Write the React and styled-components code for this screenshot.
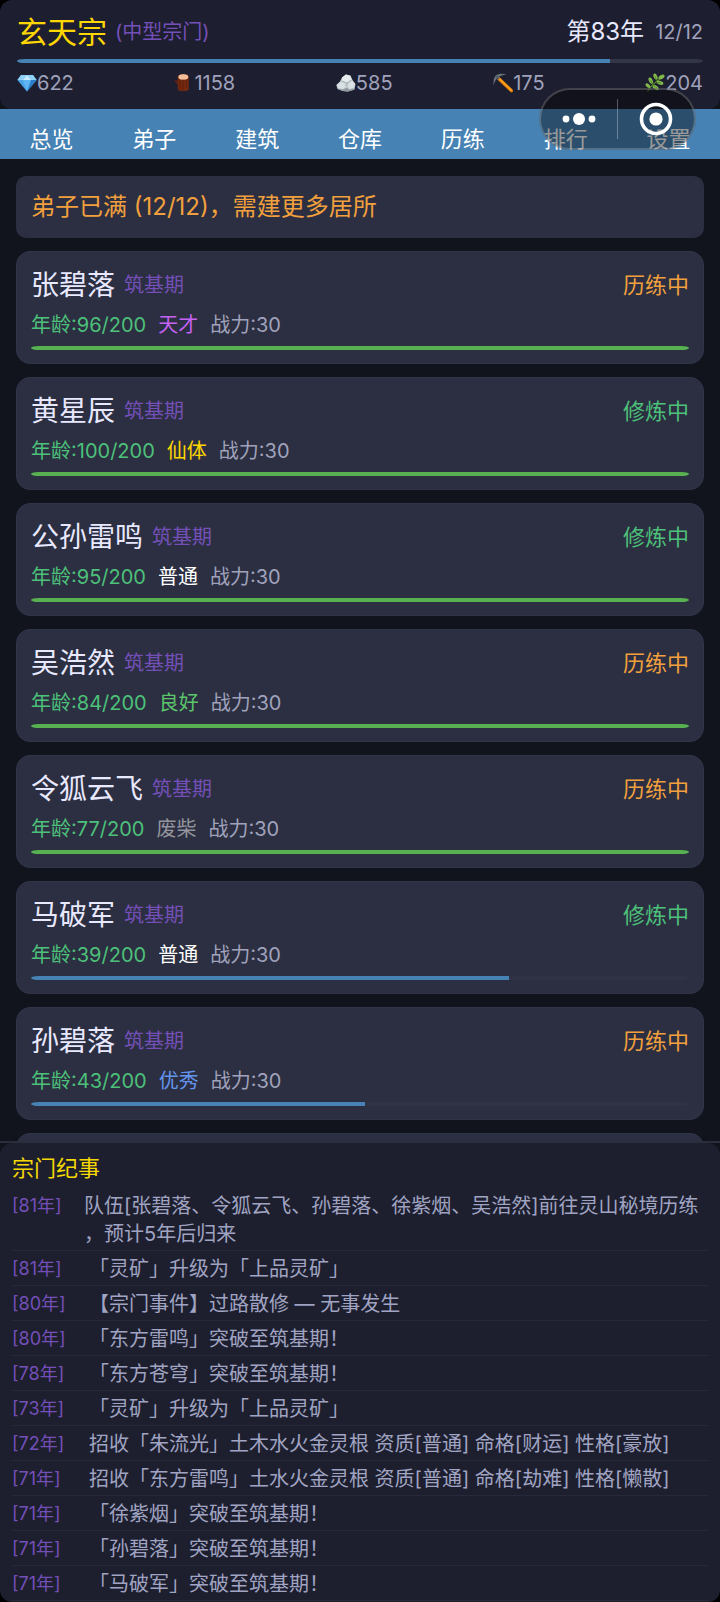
import React from "react";
import styled, { createGlobalStyle } from "styled-components";

const GlobalStyle = createGlobalStyle`
    * {
        box-sizing: border-box;
    }

    body {
        margin: 0;
        background: #000;
        color: #e8e8ff;
        font-family: Inter, "Noto Sans CJK SC", sans-serif;
        font-size: 20px;
    }

    button {
        border: 0;
        padding: 0;
        background: none;
        color: inherit;
        font: inherit;
        cursor: pointer;
    }
`

const Page = styled.div`
    position: relative;
    display: flex;
    flex-direction: column;
    height: 100vh;
    background: #11141d;
    border-radius: 12px;
    overflow: hidden;
`

const Header = styled.header`
    flex-shrink: 0;
    padding: 12px 17px;
    background: #1d1f30;
    border-radius: 12px;
`

const HeaderRow = styled.div`
    display: flex;
    align-items: center;
    justify-content: space-between;
    line-height: 40px;
`

const HeaderGroup = styled.div`
    display: flex;
    align-items: center;
    gap: ${props => props.$gap}px;
`

const SectName = styled.h1`
    margin: 0;
    font-size: 30px;
    font-weight: 400;
    color: #ffd700;
`

const SectRank = styled.span`
    color: #744fb8;
`

const Year = styled.span`
    font-size: 24px;
    color: #e8e8ff;
`

const Muted = styled.span`
    color: #a0a2bc;
`

const Track = styled.div`
    height: 4px;
    margin-top: 7px;
    border-radius: 8px / 50%;
    background: ${props => props.$back};
    overflow: hidden;
`

const Fill = styled.div`
    height: 100%;
    background: ${props => props.$color};
`

const Resources = styled.div`
    display: flex;
    justify-content: space-between;
    padding-top: 6px;
    line-height: 28px;
`

const Resource = styled.div`
    display: flex;
    align-items: center;
    color: #a0a2bc;

    svg {
        width: 20px;
        height: 20px;
    }
`

const Tabs = styled.nav`
    display: flex;
    flex-shrink: 0;
    background: #4682b4;
`

const Tab = styled.button`
    flex: 1;
    && {
        padding: 15px 0 5px;
    }
    font-size: 22px;
    line-height: 30px;
    color: #fff;
`

const Capsule = styled.div`
    position: absolute;
    top: 88px;
    right: 24px;
    display: flex;
    align-items: center;
    width: 157px;
    height: 62px;
    border: 2px solid rgba(255, 255, 255, 0.2);
    border-radius: 31px;
    background: rgba(0, 0, 0, 0.4);
`

const CapsuleButton = styled.button`
    display: flex;
    align-items: center;
    justify-content: center;
    flex: 1;
    height: 40px;

    & + & {
        border-left: 1px solid rgba(255, 255, 255, 0.3);
    }
`

const List = styled.main`
    display: flex;
    flex-direction: column;
    flex: 1;
    gap: 13px;
    min-height: 0;
    padding: 17px 16px 0;
    overflow-y: auto;
    scrollbar-width: none;
`

const Notice = styled.div`
    flex-shrink: 0;
    padding: 15px;
    border-radius: 10px;
    background: #2b2f41;
    font-size: 24px;
    line-height: 32px;
    color: #f2a03d;
`

const Card = styled.article`
    flex-shrink: 0;
    min-height: 113px;
    padding: 15px 14px 13px;
    border: 1px solid #31354a;
    border-radius: 14px;
    background: #2b2f41;
`

const CardTop = styled.div`
    display: flex;
    align-items: center;
    gap: 9px;
    line-height: 36px;
`

const Name = styled.h2`
    margin: 0;
    font-size: 28px;
    font-weight: 400;
`

const Status = styled.span`
    margin-left: auto;
    font-size: 22px;
    color: ${props => props.$away ? "#f2a03d" : "#4dc07a"};
`

const Stats = styled.div`
    display: flex;
    gap: 12px;
    margin-top: 8px;
    line-height: 28px;
    color: #a0a2bc;
`

const Stat = styled.span`
    color: ${props => props.$color};
`

const LogPanel = styled.section`
    flex-shrink: 0;
    border-top: 2px solid #2a2d3d;
`

const LogBody = styled.div`
    padding: 10px 12px 1px;
    border-radius: 12px;
    background: #1d1f2f;
`

const LogTitle = styled.h2`
    margin: 0 0 5px;
    font-size: 22px;
    font-weight: 400;
    line-height: 30px;
    color: #f5d800;
`

const LogRow = styled.div`
    display: flex;
    padding: 4px 0 2px;
    border-bottom: 1px solid #262939;
    line-height: 28px;
`

const LogYear = styled.span`
    flex-shrink: 0;
    width: ${props => props.$long ? 72 : 77}px;
    font-size: 18px;
    color: #744fb8;
`

const LogText = styled.span`
    color: #a0a4c2;
    white-space: pre;
`

const GemIcon = () => (
    <svg viewBox="0 0 20 20">
        <path d="M4 2h12l3.600 5L10 18.500.4 7z" fill="#4aa3e6" />
        <path d="M4 2 .4 7h5.400L10 2zM16 2h-6l4.200 5h5.400z" fill="#8fd0f7" />
        <path d="M10 2 5.800 7h8.400z" fill="#c8ecff" />
        <path d="M5.800 7h8.400L10 18.500z" fill="#5fb6f2" />
        <path d="M14.200 7h5.400L10 18.500z" fill="#2b7fc9" />
    </svg>
)

const WoodIcon = () => (
    <svg viewBox="0 0 20 20">
        <path d="M.5 6.500 4 8v4L1.500 9.500z" fill="#5b2113" />
        <path d="M3.800 4h11v12.500c-1.500 2.200-9.500 2.200-11 0z" fill="#74290f" />
        <path d="M6 6v11M9 7v11M12.500 6v9" stroke="#5c1f0d" strokeWidth=".8" />
        <ellipse cx="9.300" cy="4" rx="5.500" ry="3.100" fill="#8c4526" />
        <ellipse cx="9.300" cy="3.900" rx="4.800" ry="2.600" fill="#f5c3a0" />
        <ellipse cx="9.300" cy="3.900" rx="2.200" ry="1" fill="none" stroke="#e6ab87" strokeWidth=".5" />
    </svg>
)

const StoneIcon = () => (
    <svg viewBox="0 0 20 20">
        <path d="M6 4.500 10 1.500l4.500 1.300 2 4.200 3 4-1 5.500-6.500 2-5.500-.5L1.500 16 .3 12 4 8.500z" fill="#c5cdd1" />
        <path d="M6 4.500 10 1.500l4.500 1.300 1 4-4 3L6 8z" fill="#e6ebed" />
        <path d="m4 9 4 1 2 3-3 3-5-1-1-3z" fill="#d9e0e3" />
        <path d="m12 11 4-3 3 3-2 4-4 1z" fill="#dbe1e4" />
        <path d="m2 15.500 5 1 4-2 2 2 5-1-.5 1.500-5.500 1.500-5.500-.5z" fill="#8f9ba1" />
        <path d="m6 8 5 2 4-3M10 13l1.500-3" stroke="#9ca8ae" strokeWidth=".8" fill="none" />
    </svg>
)

const PickIcon = () => (
    <svg viewBox="0 0 20 20">
        <path d="m5 5 13.500 12.800" stroke="#b65b0b" strokeWidth="3.400" strokeLinecap="round" />
        <path d="m5 4.600 13.300 12.700" stroke="#ff9d16" strokeWidth="2.400" strokeLinecap="round" />
        <path d="M.6 12.500C.2 7 1.200 4 3 2.600 5 .8 9 .2 13.500 1.400 9 2 6.500 3 4.600 4.700 2.700 6.500 1.500 9 .6 12.500z" fill="#67727a" />
        <path d="m2.500 4.500 2-2L7 5 5 7z" fill="#535d64" />
    </svg>
)

const HerbIcon = () => (
    <svg viewBox="0 0 20 20">
        <path d="M2.500 18.500C5 14 9 10 16 5" stroke="#547b2b" strokeWidth="1.200" fill="none" />
        <g fill="#83b84a">
            <ellipse cx="16.500" cy="4" rx="3.300" ry="1.900" transform="rotate(-30 16.500 4)" />
            <ellipse cx="10.500" cy="3.700" rx="3.300" ry="1.800" transform="rotate(65 10.500 3.700)" />
            <ellipse cx="15" cy="9.800" rx="3.500" ry="1.900" transform="rotate(20 15 9.800)" />
            <ellipse cx="5.800" cy="7.700" rx="3.400" ry="1.900" transform="rotate(65 5.800 7.700)" />
            <ellipse cx="10.700" cy="14.500" rx="3.500" ry="1.900" transform="rotate(35 10.700 14.500)" />
            <ellipse cx="3" cy="12.700" rx="2.900" ry="1.600" transform="rotate(40 3 12.700)" />
        </g>
        <path d="m11.500 8-1.200-4.500M7.500 11.500 5.500 7M11 9l5 1M8 12l4 3" stroke="#3f7a26" strokeWidth=".7" />
    </svg>
)

const resources = [
    { icon: <GemIcon />, amount: 622 },
    { icon: <WoodIcon />, amount: 1158 },
    { icon: <StoneIcon />, amount: 585 },
    { icon: <PickIcon />, amount: 175 },
    { icon: <HerbIcon />, amount: 204 }
];

const tabs = ["总览", "弟子", "建筑", "仓库", "历练", "排行", "设置"];

const talentColors = {
    天才: "#c562f5",
    仙体: "#ffd700",
    普通: "#ffffff",
    良好: "#5cc46a",
    废柴: "#94949c",
    优秀: "#6495ed"
};

const disciples = [
    { name: "张碧落", age: 96, talent: "天才", away: true, progress: 100 },
    { name: "黄星辰", age: 100, talent: "仙体", away: false, progress: 100 },
    { name: "公孙雷鸣", age: 95, talent: "普通", away: false, progress: 100 },
    { name: "吴浩然", age: 84, talent: "良好", away: true, progress: 100 },
    { name: "令狐云飞", age: 77, talent: "废柴", away: true, progress: 100 },
    { name: "马破军", age: 39, talent: "普通", away: false, progress: 72.6 },
    { name: "孙碧落", age: 43, talent: "优秀", away: true, progress: 50.8 }
];

const logs = [
    { year: 81, text: "队伍[张碧落、令狐云飞、孙碧落、徐紫烟、吴浩然]前往灵山秘境历练\n，预计5年后归来", long: true },
    { year: 81, text: "「灵矿」升级为「上品灵矿」" },
    { year: 80, text: "【宗门事件】过路散修 — 无事发生" },
    { year: 80, text: "「东方雷鸣」突破至筑基期！" },
    { year: 78, text: "「东方苍穹」突破至筑基期！" },
    { year: 73, text: "「灵矿」升级为「上品灵矿」" },
    { year: 72, text: "招收「朱流光」土木水火金灵根 资质[普通] 命格[财运] 性格[豪放]" },
    { year: 71, text: "招收「东方雷鸣」土水火金灵根 资质[普通] 命格[劫难] 性格[懒散]" },
    { year: 71, text: "「徐紫烟」突破至筑基期！" },
    { year: 71, text: "「孙碧落」突破至筑基期！" },
    { year: 71, text: "「马破军」突破至筑基期！" }
];

const Disciple = ({ name, age, talent, away, progress }) => (
    <Card>
        <CardTop>
            <Name>{name}</Name>
            <SectRank>筑基期</SectRank>
            <Status $away={away}>{away ? "历练中" : "修炼中"}</Status>
        </CardTop>
        <Stats>
            <Stat $color="#4dc07a">年龄:{age}/200</Stat>
            <Stat $color={talentColors[talent]}>{talent}</Stat>
            <span>战力:30</span>
        </Stats>
        <Track $back="#303346">
            <Fill $color={progress === 100 ? "#58b151" : "#4682b4"} style={{ width: `${progress}%` }} />
        </Track>
    </Card>
)

const App = () => (
    <>
        <GlobalStyle />
        <Page>
            <Header>
                <HeaderRow>
                    <HeaderGroup $gap={8}>
                        <SectName>玄天宗</SectName>
                        <SectRank>(中型宗门)</SectRank>
                    </HeaderGroup>
                    <HeaderGroup $gap={11}>
                        <Year>第83年</Year>
                        <Muted>12/12</Muted>
                    </HeaderGroup>
                </HeaderRow>
                <Track $back="#333646">
                    <Fill $color="#4682b4" style={{ width: "86.5%" }} />
                </Track>
                <Resources>
                    {resources.map(item => (
                        <Resource key={item.amount}>{item.icon}{item.amount}</Resource>
                    ))}
                </Resources>
            </Header>
            <Tabs>
                {tabs.map(tab => <Tab key={tab}>{tab}</Tab>)}
            </Tabs>
            <Capsule>
                <CapsuleButton aria-label="更多">
                    <svg width="34" height="14" viewBox="0 0 34 14" fill="#fff">
                        <circle cx="4" cy="7" r="3.400" />
                        <circle cx="17" cy="7" r="6" />
                        <circle cx="30" cy="7" r="3.400" />
                    </svg>
                </CapsuleButton>
                <CapsuleButton aria-label="关闭">
                    <svg width="34" height="34" viewBox="0 0 34 34">
                        <circle cx="17" cy="17" r="14.500" fill="none" stroke="#fff" strokeWidth="3.600" />
                        <circle cx="17" cy="17" r="6.600" fill="#fff" />
                    </svg>
                </CapsuleButton>
            </Capsule>
            <List>
                <Notice>弟子已满 (12/12)，需建更多居所</Notice>
                {disciples.map(item => <Disciple key={item.name} {...item} />)}
                <Card />
            </List>
            <LogPanel>
                <LogBody>
                    <LogTitle>宗门纪事</LogTitle>
                    {logs.map((log, i) => (
                        <LogRow key={i}>
                            <LogYear $long={log.long}>[{log.year}年]</LogYear>
                            <LogText>{log.text}</LogText>
                        </LogRow>
                    ))}
                </LogBody>
            </LogPanel>
        </Page>
    </>
)

export default App;
